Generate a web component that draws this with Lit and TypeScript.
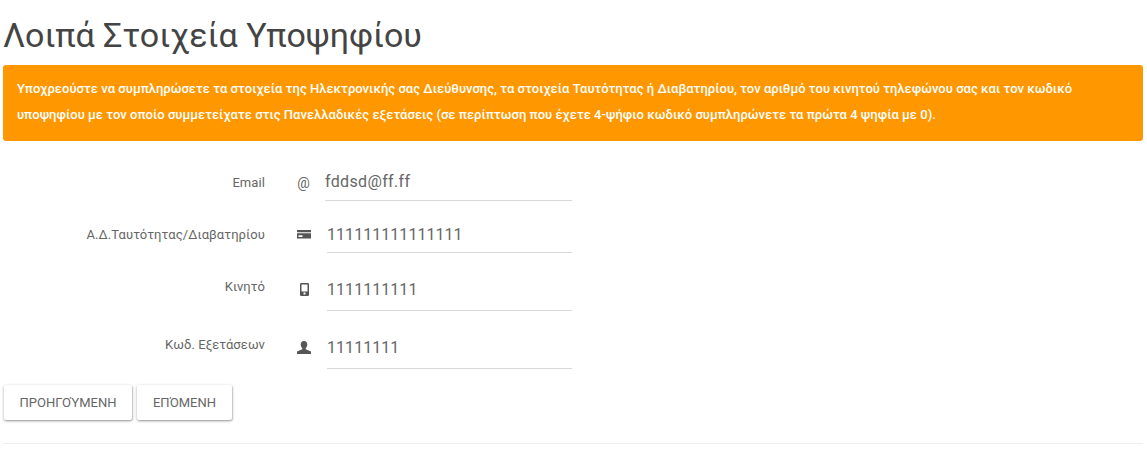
import { LitElement, html, css, svg } from "lit";
import { customElement } from "lit/decorators.js";

const icons = {
  card: svg`<path fill-rule="evenodd" d="M0 3h14v8.500H0zM0 5.200v1h14v-1zM1.500 8.300v1.700h4V8.300z" fill="#555"/>`,
  phone: svg`<path fill-rule="evenodd" d="M4.200 1h6.600A1.200 1.200 0 0 1 12 2.200v10.600A1.200 1.200 0 0 1 10.800 14H4.200A1.200 1.200 0 0 1 3 12.800V2.200A1.200 1.200 0 0 1 4.200 1zM4.500 2.600v7h6v-7zM6.500 10.600v2h2v-2z" fill="#555"/>`,
  user: svg`<path d="M7 1c2.100 0 3.300 1.600 3.300 3.500 0 1.500-.7 2.900-1.600 3.600v1.200L14 11.500V14H0v-2.500l5.300-2.200V8.100C4.400 7.400 3.700 6 3.700 4.500 3.700 2.600 4.900 1 7 1z" fill="#555"/>`,
};

@customElement("app-root")
export class AppRoot extends LitElement {
  static styles = css`
    :host { display: block; font-family: Roboto, "Noto Sans", sans-serif; color: #555; background: #fff; }
    .page { display: flex; flex-direction: column; padding: 0 4px 0 3px; height: 454px; box-sizing: border-box; }
    h1 { margin: 0; padding-top: 13px; height: 65px; box-sizing: border-box; font-size: 34px; line-height: 44px; font-weight: 400; color: #444; white-space: nowrap; }
    .alert { height: 76px; box-sizing: border-box; padding: 11px 14px; background: #ff9800; color: #fff; border-radius: 3px; font-size: 13px; font-weight: 500; line-height: 26px; letter-spacing: 0.03px; }
    .form { display: flex; flex-direction: column; margin-top: 24px; }
    .row { display: grid; grid-template-columns: 262px 60px 247px; height: 52px; }
    .row.tall { height: 58px; }
    .label { text-align: right; font-size: 13px; line-height: 18px; padding-top: 9px; color: #666; letter-spacing: 0.08px; }
    .icon { display: flex; justify-content: center; align-items: flex-start; padding-left: 17px; height: 35px; padding-top: 10px; box-sizing: border-box; }
    .tall .icon { padding-top: 13px; }
    .icon svg { width: 15px; height: 15px; display: block; flex: none; margin-left: 1px; }
    .at { font-size: 14px; line-height: 18px; margin-top: -1px; color: #666; }
    .field { box-sizing: border-box; height: 36px; padding-top: 6px; margin-left: 2px; border-bottom: 1px solid #d8d8d8; font-size: 16px; line-height: 24px; color: #666; letter-spacing: 0.05px; }
    .tall .field { height: 42px; padding-top: 9px; }
    .field.mail { margin-left: 0; letter-spacing: 0.35px; padding-top: 5px; }
    .buttons { display: flex; gap: 5px; padding-left: 1px; }
    button { font: 400 13px/1 Roboto, sans-serif; color: #666; background: #fff; border: 0; border-radius: 2px; height: 35px; width: 128px; padding: 0; box-shadow: 0 1px 3px rgba(0,0,0,.35), 1px 1px 1px rgba(0,0,0,.12); }
    button.next { width: 95px; }
    hr { border: 0; border-top: 1px solid #eee; margin: 23px 0 0; }
  `;

  private rows = [
    { label: "Email", icon: null, value: "fddsd@ff.ff", tall: false },
    { label: "Α.Δ.Ταυτότητας/Διαβατηρίου", icon: icons.card, value: "111111111111111", tall: false },
    { label: "Κινητό", icon: icons.phone, value: "1111111111", tall: true },
    { label: "Κωδ. Εξετάσεων", icon: icons.user, value: "11111111", tall: true },
  ];

  render() {
    return html`<div class="page">
      <h1>Λοιπά Στοιχεία Υποψηφίου</h1>
      <div class="alert">Υποχρεούστε να συμπληρώσετε τα στοιχεία της Ηλεκτρονικής σας Διεύθυνσης, τα στοιχεία Ταυτότητας ή Διαβατηρίου, τον αριθμό του κινητού τηλεφώνου σας και τον κωδικό υποψηφίου με τον οποίο συμμετείχατε στις Πανελλαδικές εξετάσεις (σε περίπτωση που έχετε 4-ψήφιο κωδικό συμπληρώνετε τα πρώτα 4 ψηφία με 0).</div>
      <div class="form">
        ${this.rows.map((r) => html`<div class="row ${r.tall ? "tall" : ""}">
          <div class="label">${r.label}</div>
          <div class="icon">${r.icon ? html`<svg viewBox="0 0 15 15">${r.icon}</svg>` : html`<span class="at">@</span>`}</div>
          <div class="field ${r.icon ? "" : "mail"}">${r.value}</div>
        </div>`)}
      </div>
      <div class="buttons"><button>ΠΡΟΗΓΟΎΜΕΝΗ</button><button class="next">ΕΠΌΜΕΝΗ</button></div>
      <hr />
    </div>`;
  }
}
